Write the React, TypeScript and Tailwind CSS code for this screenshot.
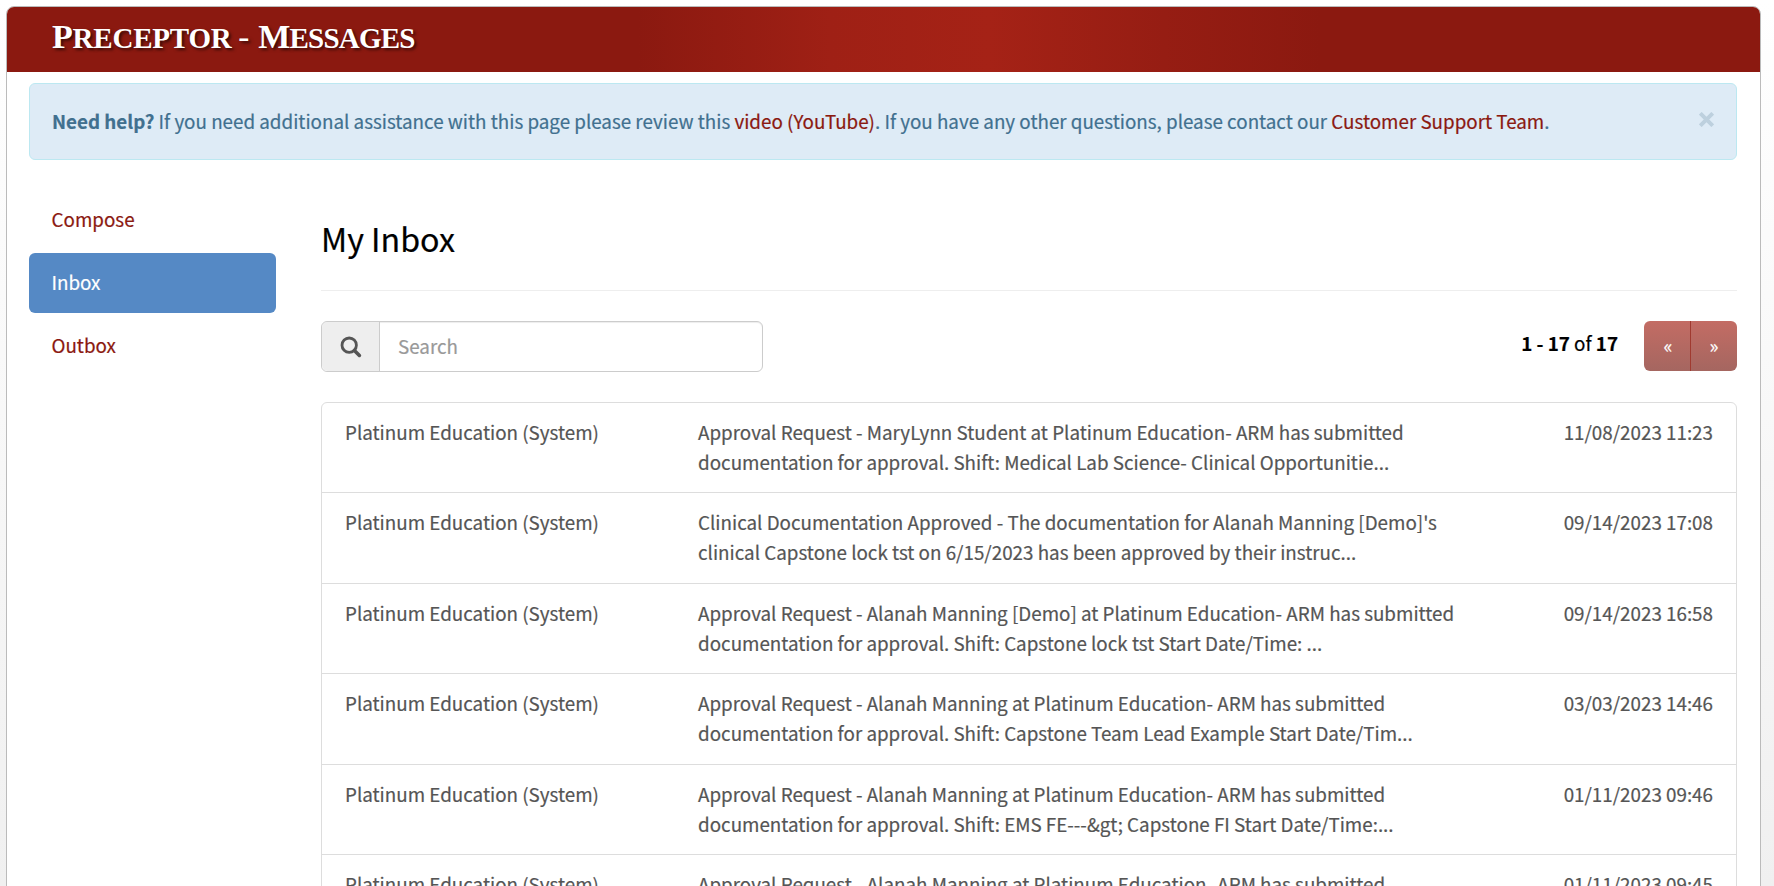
import type { ReactNode } from "react";

const messages = [
  {
    date: "11/08/2023 11:23",
    lines: [
      "Approval Request - MaryLynn Student at Platinum Education- ARM has submitted",
      "documentation for approval. Shift: Medical Lab Science- Clinical Opportunitie...",
    ],
  },
  {
    date: "09/14/2023 17:08",
    lines: [
      "Clinical Documentation Approved - The documentation for Alanah Manning [Demo]'s",
      "clinical Capstone lock tst on 6/15/2023 has been approved by their instruc...",
    ],
  },
  {
    date: "09/14/2023 16:58",
    lines: [
      "Approval Request - Alanah Manning [Demo] at Platinum Education- ARM has submitted",
      "documentation for approval. Shift: Capstone lock tst Start Date/Time: ...",
    ],
  },
  {
    date: "03/03/2023 14:46",
    lines: [
      "Approval Request - Alanah Manning at Platinum Education- ARM has submitted",
      "documentation for approval. Shift: Capstone Team Lead Example Start Date/Tim...",
    ],
  },
  {
    date: "01/11/2023 09:46",
    lines: [
      "Approval Request - Alanah Manning at Platinum Education- ARM has submitted",
      "documentation for approval. Shift: EMS FE---&gt; Capstone FI Start Date/Time:...",
    ],
  },
  {
    date: "01/11/2023 09:45",
    lines: ["Approval Request - Alanah Manning at Platinum Education- ARM has submitted"],
  },
];

function NavItem({ active, children }: { active?: boolean; children: ReactNode }) {
  return (
    <a
      href="#"
      className={
        active
          ? "block h-[60px] rounded-md bg-[#5589c5] px-[22.5px] leading-[58px] text-white"
          : "block h-[60px] rounded-md px-[22.5px] leading-[58px] text-[#8b1910]"
      }
    >
      {children}
    </a>
  );
}

export default function App() {
  return (
    <div className="h-[886px] overflow-hidden bg-linear-to-b from-white to-[#f0f0f0] px-1.5 pt-1.5 font-['Noto_Sans_CJK_SC',sans-serif] text-[18.81px] leading-[30px] text-[#555] [-webkit-text-stroke:0.2px]">
      <div className="h-[900px] w-[1755px] overflow-hidden rounded-t-lg border border-[#bbb] bg-white">
        <header className="flex h-[65px] items-start bg-[linear-gradient(90deg,#8b1910_36%,#9f2015_47%,#a52216_56%,#961d13_66%,#8b1910_75%)] pt-2 pl-[45px]">
          <h1 className="flex font-['Liberation_Serif',serif] text-[29px] leading-[44px] font-bold text-white uppercase [-webkit-text-stroke:0] text-shadow-[2px_2px_3px_rgb(0_0_0/0.6)]">
            <span className="inline-block tracking-[-0.2px] first-letter:text-[34px]">Preceptor</span>
            <span className="mr-2 ml-[7px] inline-block scale-x-115">-</span>
            <span className="ml-[2px] inline-block tracking-[-0.8px] first-letter:text-[34px]">Messages</span>
          </h1>
        </header>

        <div className="pt-[11px] pr-[23px] pl-[22px]">
          <div className="flex h-[77px] items-center justify-between rounded-md border border-[#bce8f1] bg-[#deebf6] px-[22px] text-[#41708f]">
            <p className="-mt-0.5">
              <strong className="font-bold">Need help?</strong> If you need additional assistance with this page please
              review this <a href="#" className="text-[#8b1910]">video (YouTube)</a>. If you have any other questions,
              please contact our <a href="#" className="text-[#8b1910]">Customer Support Team</a>.
            </p>
            <button className="-mt-[5px] text-[#bdd0de]" aria-label="Close">
              <svg width="15" height="15" viewBox="0 0 14 14" stroke="currentColor" strokeWidth="3.6">
                <path d="M1.2 1.2 12.8 12.8M12.8 1.2 1.2 12.8" />
              </svg>
            </button>
          </div>

          <div className="flex pt-[30px]">
            <nav className="flex w-[247px] flex-col gap-[3px]">
              <NavItem>Compose</NavItem>
              <NavItem active>Inbox</NavItem>
              <NavItem>Outbox</NavItem>
            </nav>

            <main className="ml-[45px] w-[1416px] pt-[24px]">
              <h2 className="h-[77px] border-b border-[#eee] text-[32.2px] leading-[48px] text-black">My Inbox</h2>

              <div className="mt-[30px] flex items-start justify-between">
                <div className="flex h-[51px] w-[442px] rounded-md border border-[#ccc] shadow-[inset_0_1px_1px_rgb(0_0_0/0.075)]">
                  <span className="flex w-[58px] items-center justify-center rounded-l-md border-r border-[#ccc] bg-[#eee]">
                    <svg width="22" height="22" viewBox="0 0 22 22" fill="none" stroke="#555">
                      <circle cx="9.2" cy="9.2" r="7.2" strokeWidth="2.8" />
                      <path d="M14.4 14.4 19.4 19.4" strokeWidth="3.6" strokeLinecap="round" />
                    </svg>
                  </span>
                  <input
                    placeholder="Search"
                    className="min-w-0 flex-1 bg-transparent px-[18px] pb-0.5 outline-none placeholder:text-[#999]"
                  />
                </div>

                <div className="flex">
                  <p className="mt-[7px] mr-[26px] text-black">
                    <b className="font-bold">1 - 17</b> of <b className="font-bold">17</b>
                  </p>
                  <div className="flex h-[50px] w-[93px] overflow-hidden rounded-md bg-linear-to-b from-[#c36c64] to-[#a56660] text-white">
                    <button className="w-[47px] border-r border-[#a03a30] pb-0.5 pl-0.5">«</button>
                    <button className="w-[46px] pb-0.5">»</button>
                  </div>
                </div>
              </div>

              <div className="mt-[30px] rounded-t-md border border-[#ddd]">
                {messages.map((message) => (
                  <div key={message.date} className="flex h-[90.4px] border-b border-[#ddd] px-[23px] pt-[14px]">
                    <div className="w-[353px]">Platinum Education (System)</div>
                    <div className="flex-1 whitespace-nowrap">
                      {message.lines.map((line) => (
                        <div key={line}>{line}</div>
                      ))}
                    </div>
                    <div>{message.date}</div>
                  </div>
                ))}
              </div>
            </main>
          </div>
        </div>
      </div>
    </div>
  );
}
